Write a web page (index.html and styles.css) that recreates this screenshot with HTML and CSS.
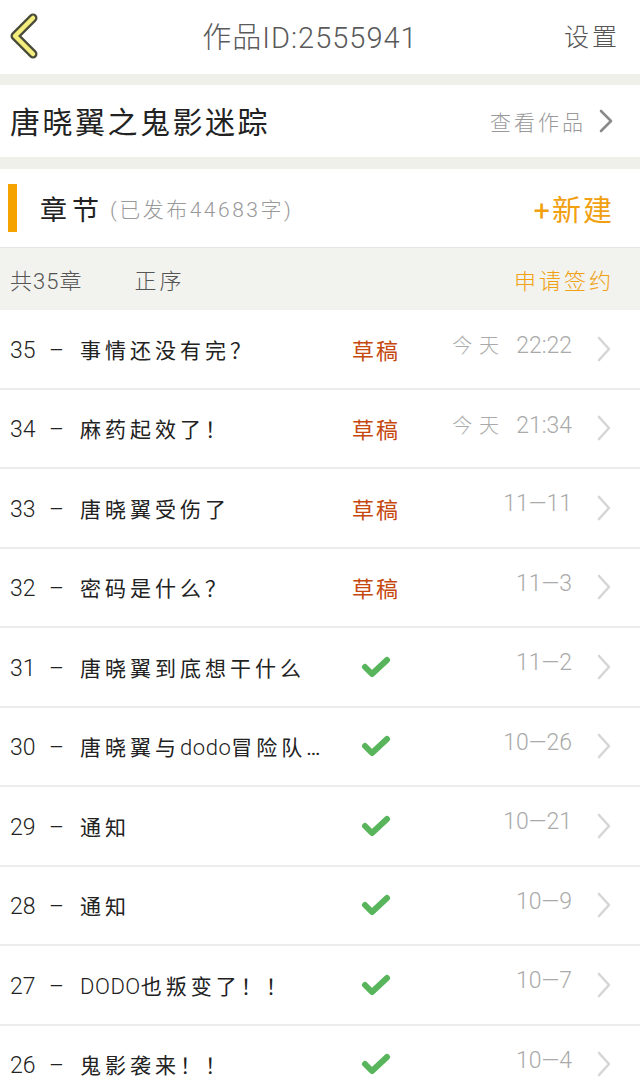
FILE: index.html
```html
<html>
<head>
    <meta http-equiv="Content-Type" content="text/html;charset=utf-8">
    <link rel="stylesheet" href="styles.css">
</head>
<body>
    <div class="topbar">
        <svg class="back" width="34" height="46" viewBox="0 0 34 46">
            <polyline points="26,5 8,23 26,41" fill="none" stroke="#4a4a3a" stroke-width="9" stroke-linecap="round" stroke-linejoin="round"/>
            <polyline points="26,5 8,23 26,41" fill="none" stroke="#f4ef7c" stroke-width="4.5" stroke-linecap="round" stroke-linejoin="round"/>
        </svg>
        <div class="topbar-title">作品ID:2555941</div>
        <div class="topbar-right">设置</div>
    </div>

    <div class="work-row">
        <div class="work-name">唐晓翼之鬼影迷踪</div>
        <div class="work-link">查看作品
            <svg width="16" height="24" viewBox="0 0 16 24"><polyline points="3,2 13,12 3,22" fill="none" stroke="#8a8a8a" stroke-width="2.6" stroke-linecap="round" stroke-linejoin="round"/></svg>
        </div>
    </div>

    <div class="section-head">
        <div class="bar"></div>
        <div class="section-title">章节</div>
        <div class="section-sub">(已发布44683字)</div>
        <div class="section-new">+新建</div>
    </div>

    <div class="sub-head">
        <span class="count">共35章</span>
        <span class="order">正序</span>
        <span class="sign">申请签约</span>
    </div>

    <div class="chapters">
        <div class="row"><div class="name"><span class="no">35 –</span>事情还没有完？</div><div class="status draft">草稿</div><div class="date"><span class="day">今天</span>22:22</div><div class="arrow"><svg width="16" height="26" viewBox="0 0 16 26"><polyline points="3,2 13,13 3,24" fill="none" stroke="#d6d6d6" stroke-width="2.6" stroke-linecap="round" stroke-linejoin="round"/></svg></div></div>
        <div class="row"><div class="name"><span class="no">34 –</span>麻药起效了！</div><div class="status draft">草稿</div><div class="date"><span class="day">今天</span>21:34</div><div class="arrow"><svg width="16" height="26" viewBox="0 0 16 26"><polyline points="3,2 13,13 3,24" fill="none" stroke="#d6d6d6" stroke-width="2.6" stroke-linecap="round" stroke-linejoin="round"/></svg></div></div>
        <div class="row"><div class="name"><span class="no">33 –</span>唐晓翼受伤了</div><div class="status draft">草稿</div><div class="date">11—11</div><div class="arrow"><svg width="16" height="26" viewBox="0 0 16 26"><polyline points="3,2 13,13 3,24" fill="none" stroke="#d6d6d6" stroke-width="2.6" stroke-linecap="round" stroke-linejoin="round"/></svg></div></div>
        <div class="row"><div class="name"><span class="no">32 –</span>密码是什么？</div><div class="status draft">草稿</div><div class="date">11—3</div><div class="arrow"><svg width="16" height="26" viewBox="0 0 16 26"><polyline points="3,2 13,13 3,24" fill="none" stroke="#d6d6d6" stroke-width="2.6" stroke-linecap="round" stroke-linejoin="round"/></svg></div></div>
        <div class="row"><div class="name"><span class="no">31 –</span>唐晓翼到底想干什么</div><div class="status"><svg width="30" height="24" viewBox="0 0 30 24"><polyline points="4,12 11,19 26,5" fill="none" stroke="#58b55c" stroke-width="6" stroke-linecap="round" stroke-linejoin="round"/></svg></div><div class="date">11—2</div><div class="arrow"><svg width="16" height="26" viewBox="0 0 16 26"><polyline points="3,2 13,13 3,24" fill="none" stroke="#d6d6d6" stroke-width="2.6" stroke-linecap="round" stroke-linejoin="round"/></svg></div></div>
        <div class="row"><div class="name"><span class="no">30 –</span>唐晓翼与<span class="latin">dodo</span>冒险队…</div><div class="status"><svg width="30" height="24" viewBox="0 0 30 24"><polyline points="4,12 11,19 26,5" fill="none" stroke="#58b55c" stroke-width="6" stroke-linecap="round" stroke-linejoin="round"/></svg></div><div class="date">10—26</div><div class="arrow"><svg width="16" height="26" viewBox="0 0 16 26"><polyline points="3,2 13,13 3,24" fill="none" stroke="#d6d6d6" stroke-width="2.6" stroke-linecap="round" stroke-linejoin="round"/></svg></div></div>
        <div class="row"><div class="name"><span class="no">29 –</span>通知</div><div class="status"><svg width="30" height="24" viewBox="0 0 30 24"><polyline points="4,12 11,19 26,5" fill="none" stroke="#58b55c" stroke-width="6" stroke-linecap="round" stroke-linejoin="round"/></svg></div><div class="date">10—21</div><div class="arrow"><svg width="16" height="26" viewBox="0 0 16 26"><polyline points="3,2 13,13 3,24" fill="none" stroke="#d6d6d6" stroke-width="2.6" stroke-linecap="round" stroke-linejoin="round"/></svg></div></div>
        <div class="row"><div class="name"><span class="no">28 –</span>通知</div><div class="status"><svg width="30" height="24" viewBox="0 0 30 24"><polyline points="4,12 11,19 26,5" fill="none" stroke="#58b55c" stroke-width="6" stroke-linecap="round" stroke-linejoin="round"/></svg></div><div class="date">10—9</div><div class="arrow"><svg width="16" height="26" viewBox="0 0 16 26"><polyline points="3,2 13,13 3,24" fill="none" stroke="#d6d6d6" stroke-width="2.6" stroke-linecap="round" stroke-linejoin="round"/></svg></div></div>
        <div class="row"><div class="name"><span class="no">27 –</span><span class="latin">DODO</span>也叛变了！！</div><div class="status"><svg width="30" height="24" viewBox="0 0 30 24"><polyline points="4,12 11,19 26,5" fill="none" stroke="#58b55c" stroke-width="6" stroke-linecap="round" stroke-linejoin="round"/></svg></div><div class="date">10—7</div><div class="arrow"><svg width="16" height="26" viewBox="0 0 16 26"><polyline points="3,2 13,13 3,24" fill="none" stroke="#d6d6d6" stroke-width="2.6" stroke-linecap="round" stroke-linejoin="round"/></svg></div></div>
        <div class="row"><div class="name"><span class="no">26 –</span>鬼影袭来！！</div><div class="status"><svg width="30" height="24" viewBox="0 0 30 24"><polyline points="4,12 11,19 26,5" fill="none" stroke="#58b55c" stroke-width="6" stroke-linecap="round" stroke-linejoin="round"/></svg></div><div class="date">10—4</div><div class="arrow"><svg width="16" height="26" viewBox="0 0 16 26"><polyline points="3,2 13,13 3,24" fill="none" stroke="#d6d6d6" stroke-width="2.6" stroke-linecap="round" stroke-linejoin="round"/></svg></div></div>
    </div>
</body>
</html>
```

FILE: styles.css
```css
body {
    margin: 0;
    background-color: #f0f0eb;
    font-family: Roboto, "Noto Sans CJK SC", sans-serif;
    font-weight: 300;
    color: #222;
    overflow: hidden;
}

.topbar {
    height: 74px;
    background: white;
    display: flex;
    align-items: center;
    position: relative;
}

.back {
    margin-left: 7px;
    margin-top: -2px;
}

.topbar-title {
    position: absolute;
    left: 0;
    right: 0;
    top: 14px;
    text-align: center;
    padding-right: 20px;
    font-size: 29px;
    color: #5a5a5a;
    letter-spacing: 1px;
    pointer-events: none;
}

.topbar-right {
    margin-left: auto;
    margin-right: 20px;
    margin-top: -4px;
    font-size: 25px;
    color: #555;
    letter-spacing: 3px;
}

.work-row {
    margin-top: 11px;
    height: 72px;
    background: white;
    display: flex;
    align-items: center;
    padding: 0 26px 0 10px;
}

.work-name {
    font-size: 30px;
    font-weight: 400;
    letter-spacing: 2.5px;
    color: #222;
    margin-top: -3px;
}

.work-link {
    margin-left: auto;
    font-size: 21px;
    color: #999;
    letter-spacing: 3px;
    display: flex;
    align-items: center;
    gap: 12px;
}

.section-head {
    margin-top: 12px;
    height: 78px;
    background: white;
    display: flex;
    align-items: center;
    padding-right: 26px;
}

.bar {
    width: 9px;
    height: 48px;
    background: #f5a300;
    margin-left: 8px;
    margin-right: 23px;
}

.section-title {
    font-size: 27px;
    font-weight: 400;
    letter-spacing: 5px;
    color: #222;
}

.section-sub {
    font-size: 21px;
    color: #999;
    margin-left: 6px;
    letter-spacing: 2.5px;
}

.section-new {
    margin-left: auto;
    font-size: 29px;
    font-weight: 400;
    color: #f0a010;
    letter-spacing: 2px;
}

.sub-head {
    height: 63px;
    background: #f2f2ee;
    border-top: 1px solid #e6e6e2;
    box-sizing: border-box;
    display: flex;
    align-items: center;
    padding: 0 26px 0 10px;
    font-size: 22px;
    color: #555;
}

.count {
    letter-spacing: 1px;
}

.order {
    margin-left: 52px;
    letter-spacing: 3px;
}

.sign {
    margin-left: auto;
    color: #f0a010;
    letter-spacing: 3px;
}

.chapters {
    background: white;
}

.row {
    height: 79.5px;
    box-sizing: border-box;
    border-bottom: 2px solid #ececec;
    display: grid;
    grid-template-columns: 1fr 64px 182px 52px;
    align-items: center;
    padding-left: 10px;
}

.name {
    font-size: 21px;
    font-weight: 400;
    color: #222;
    letter-spacing: 4px;
    white-space: nowrap;
    overflow: hidden;
}

.no {
    font-size: 23px;
    font-weight: 300;
    letter-spacing: 0;
    word-spacing: 8px;
    margin-right: 16px;
}

.latin {
    font-weight: 300;
    font-size: 22px;
    letter-spacing: 0.5px;
}

.status {
    text-align: center;
    font-size: 22px;
    font-weight: 400;
    letter-spacing: 2px;
    display: flex;
    justify-content: center;
    padding-left: 4px;
}

.draft {
    color: #c5480f;
}

.date {
    text-align: right;
    padding-right: 16px;
    font-size: 23px;
    color: #aaa;
    margin-top: -8px;
}

.day {
    font-size: 20px;
    letter-spacing: 7px;
    margin-right: 10px;
}

.arrow {
    padding-left: 8px;
    display: flex;
    align-items: center;
}
```
